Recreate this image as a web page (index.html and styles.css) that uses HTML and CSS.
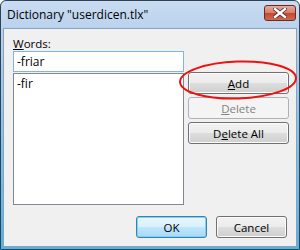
FILE: index.html
```html
<!DOCTYPE html>
<html lang="en">
<head>
  <meta charset="UTF-8">
  <title>Dictionary</title>
  <link rel="stylesheet" href="styles.css">
</head>
<body>
  <div class="window">
    <div class="titlebar">
      <span class="title">Dictionary "userdicen.tlx"</span>
      <div class="close">
        <svg width="14" height="10" viewBox="0 0 14 10">
          <path d="M2 1 L12 9 M12 1 L2 9" stroke="#4a2a28" stroke-width="4" stroke-linecap="square"/>
          <path d="M2 1 L12 9 M12 1 L2 9" stroke="#ffffff" stroke-width="2.4" stroke-linecap="square"/>
        </svg>
      </div>
    </div>

    <div class="client">
      <div class="main">
        <div class="words">
          <label class="lbl"><u>W</u>ords:</label>
          <input class="entry" type="text" value="-friar">
          <div class="list">
            <div class="item">-fir</div>
          </div>
        </div>
        <div class="side">
          <button class="btn"><u>A</u>dd</button>
          <button class="btn disabled"><u>D</u>elete</button>
          <button class="btn">D<u>e</u>lete All</button>
        </div>
      </div>
      <div class="footer">
        <button class="btn default">OK</button>
        <button class="btn">Cancel</button>
      </div>

      <svg class="mark" width="124" height="44" viewBox="0 0 124 44">
        <ellipse cx="62" cy="22" rx="58" ry="18.5" fill="none" stroke="#ee1111" stroke-width="2" transform="rotate(-2 62 22)"/>
      </svg>
    </div>
  </div>
</body>
</html>
```

FILE: styles.css
```css
body {
  margin: 0;
  font-family: "Open Sans", "Noto Sans", sans-serif;
  font-size: 11.5px;
  background-color: #ffffff;
}
.window {
  width: 300px;
  height: 250px;
  box-sizing: border-box;
  border: 1px solid #2d4157;
  border-radius: 6px 6px 0 0;
  background: linear-gradient(#c9dcf1, #b9d1ec 30px, #4fb6e6 240px);
  display: flex;
  flex-direction: column;
}
.titlebar {
  height: 27px;
  display: flex;
  align-items: flex-start;
  justify-content: space-between;
  padding: 0 3px 0 6px;
}
.title {
  margin-top: 5px;
  font-size: 12px;
  color: #000;
}
.close {
  width: 32px;
  height: 16px;
  margin-top: 4px;
  box-sizing: border-box;
  border: 1px solid #6e2a22;
  border-radius: 3px;
  background: linear-gradient(#e8a99e, #d57d6d 50%, #c3472f 51%, #d06a4f);
  display: flex;
  align-items: center;
  justify-content: center;
}
.client {
  position: relative;
  flex: 1;
  margin: 0 2px 2px 2px;
  border: 1px solid #8aa2bd;
  background-color: #f0f0f0;
  padding: 7px 9px 8px 9px;
  display: flex;
  flex-direction: column;
}
.main {
  display: flex;
  gap: 4px;
}
.words {
  width: 171px;
  display: flex;
  flex-direction: column;
}
.lbl {
  display: block;
  height: 15px;
}
.entry {
  width: 171px;
  height: 21px;
  box-sizing: border-box;
  border: 1px solid #7eb4ea;
  padding: 0 3px;
  font-family: inherit;
  font-size: 12px;
  outline: none;
}
.list {
  height: 132px;
  margin-top: 1px;
  box-sizing: border-box;
  border: 1px solid #828790;
  background-color: #ffffff;
  padding: 1px 3px;
  font-size: 12px;
}
.side {
  display: flex;
  flex-direction: column;
  gap: 3px;
  padding-top: 36px;
}
.side .btn {
  width: 101px;
}
.btn {
  height: 22px;
  width: 71px;
  box-sizing: border-box;
  border: 1px solid #707070;
  border-radius: 3px;
  background: linear-gradient(#f2f2f2, #ebebeb 50%, #dddddd 51%, #cfcfcf);
  font-family: inherit;
  font-size: 11.5px;
  color: #000;
  padding: 0;
  box-shadow: inset 0 0 0 1px #fbfbfb;
}
.btn.disabled {
  color: #838383;
  border-color: #adb2b5;
  background: #f4f4f4;
  box-shadow: none;
}
.btn.default {
  border-color: #3c7fb1;
  background: linear-gradient(#eaf6fd, #d9f0fc 50%, #bee6fd 51%, #a7d9f5);
  box-shadow: inset 0 0 0 1px #7ed2f8;
}
.footer {
  margin-top: auto;
  display: flex;
  justify-content: flex-end;
  gap: 9px;
}
.mark {
  position: absolute;
  left: 172px;
  top: 29px;
}
```
